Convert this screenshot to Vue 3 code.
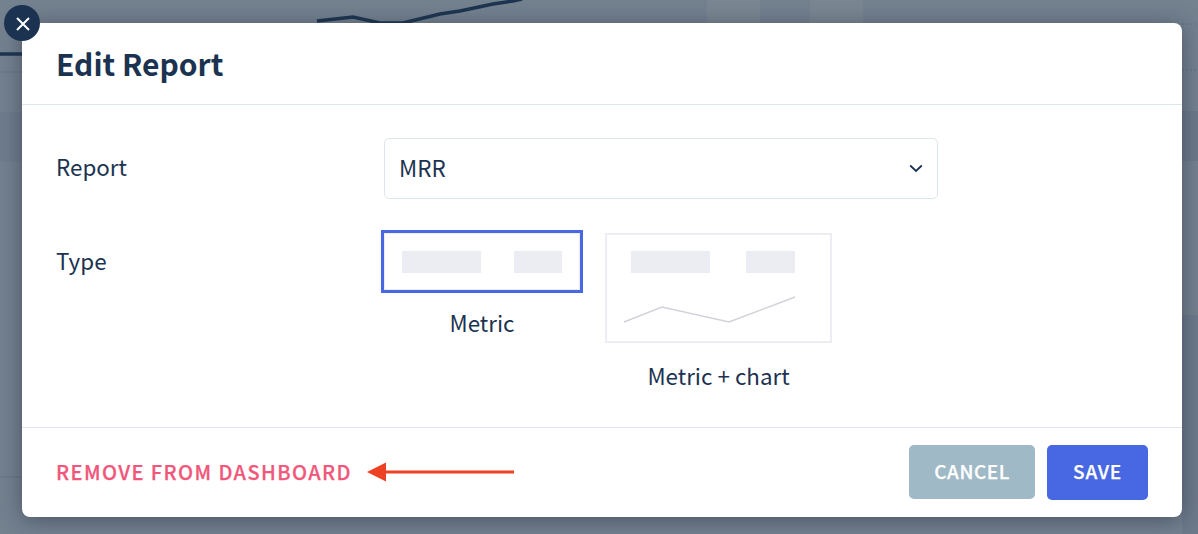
<script setup>
const rows = ['Report', 'Type']
</script>

<template>
  <div class="page">
    <svg class="backdrop" width="1198" height="534" viewBox="0 0 1198 534" aria-hidden="true">
      <rect x="707" y="0" width="53" height="23" fill="#7a8792" />
      <rect x="810" y="0" width="53" height="23" fill="#7a8792" />
      <rect x="0" y="112" width="22" height="50" fill="#6f7c8c" />
      <rect x="1182" y="111" width="16" height="50" fill="#6c7989" />
      <rect x="1182" y="315" width="16" height="219" fill="#6d7a8b" />
      <path d="M0 54H22M317 21L353 17L380 23L403 23L440 14L460 11L493 4L513 1L522 -1" fill="none" stroke="#1d3550" stroke-width="3.5" />
      <path d="M0 72H22M0 477H22" fill="none" stroke="#6b7887" stroke-width="1.5" />
      <path d="M1182 24H1198M1182 70H1198" fill="none" stroke="#67768a" stroke-width="1.5" stroke-dasharray="2 2" />
    </svg>

    <div class="modal">
      <button class="close" aria-label="Close">
        <svg width="14" height="14" viewBox="0 0 14 14"><path d="M1 1L13 13M13 1L1 13" stroke="#fff" stroke-width="2" fill="none" /></svg>
      </button>

      <header class="head"><h1>Edit Report</h1></header>

      <section class="body">
        <div class="row report-row">
          <label class="label report-label">{{ rows[0] }}</label>
          <div class="select">
            <span class="value">MRR</span>
            <svg width="14" height="9" viewBox="0 0 14 9"><path d="M1.2 1.5L7 7L12.8 1.5" fill="none" stroke="#1b3350" stroke-width="1.8" /></svg>
          </div>
        </div>
        <div class="row type-row">
          <label class="label type-label">{{ rows[1] }}</label>
          <div class="types">
            <div class="type">
              <div class="card card-active">
                <i class="bar bar-lg"></i>
                <i class="bar bar-sm"></i>
              </div>
              <span class="cap">Metric</span>
            </div>
            <div class="type">
              <div class="card card-chart">
                <div class="bars">
                  <i class="bar bar-lg"></i>
                  <i class="bar bar-sm"></i>
                </div>
                <svg class="spark" width="173" height="28" viewBox="0 0 173 28"><path d="M1 26L39 11L106 26L172 1" fill="none" stroke="#d1d3da" stroke-width="1.6" /></svg>
              </div>
              <span class="cap">Metric + chart</span>
            </div>
          </div>
        </div>
      </section>

      <footer class="foot">
        <a class="remove">REMOVE FROM DASHBOARD</a>
        <svg class="arrow" width="148" height="22" viewBox="0 0 148 22"><path d="M19 11H147" stroke="#ee4023" stroke-width="3" /><path d="M0 11L19 1.5V20.5Z" fill="#ee4023" /></svg>
        <div class="actions">
          <button class="btn cancel">CANCEL</button>
          <button class="btn save">SAVE</button>
        </div>
      </footer>
    </div>
  </div>
</template>

<style>
html, body { margin: 0; background: #74818f; }
</style>

<style scoped>
.page {
  position: relative;
  width: 1198px;
  height: 534px;
  box-sizing: border-box;
  padding: 23px 16px 17px 22px;
  background: #74818f;
  overflow: hidden;
  font-family: "Noto Sans CJK SC", "Noto Sans", sans-serif;
  color: #1b3350;
}
.backdrop { position: absolute; left: 0; top: 0; }
.modal {
  position: relative;
  height: 494px;
  display: flex;
  flex-direction: column;
  background: #fff;
  border-radius: 8px;
  box-shadow: 0 3px 22px rgba(30, 40, 55, 0.5);
}
.close {
  position: absolute;
  left: -18px;
  top: -18px;
  width: 36px;
  height: 36px;
  padding: 1px 0 0 1px;
  box-sizing: border-box;
  border: 0;
  border-radius: 50%;
  background: #1b3350;
  display: flex;
  align-items: center;
  justify-content: center;
}
.head {
  height: 82px;
  box-sizing: border-box;
  border-bottom: 1px solid #dfe5ee;
  padding: 0 34px 2px;
  display: flex;
  align-items: center;
}
h1 {
  margin: 0;
  font-size: 30px;
  line-height: 40px;
  font-weight: 600;
}
.body {
  height: 323px;
  box-sizing: border-box;
  padding-top: 33px;
  border-bottom: 1px solid #e2e3ec;
}
.row { display: flex; padding-left: 34px; }
.label { width: 328px; font-size: 22.4px; line-height: 30px; }
.report-row { align-items: center; }
.report-label { padding-bottom: 6px; }
.select {
  width: 554px;
  height: 61px;
  box-sizing: border-box;
  border: 1px solid #dfe5ee;
  border-radius: 5px;
  padding: 0 14px;
  display: flex;
  align-items: center;
  justify-content: space-between;
  font-size: 22.4px;
}
.value { padding-bottom: 3px; }
.type-row { margin-top: 31px; }
.type-label { padding-top: 15px; }
.types { display: flex; gap: 22px; align-items: flex-start; margin-left: -3px; }
.type { display: flex; flex-direction: column; align-items: center; }
.card { box-sizing: border-box; }
.card-active {
  width: 202px;
  height: 63px;
  border: 3px solid #4767e3;
  box-shadow: inset 0 0 0 1px #ecedf3;
  padding: 18px 18px 0;
  display: flex;
  gap: 33px;
  align-items: flex-start;
}
.card-active .bar-sm { width: 48px; }
.card-chart {
  width: 227px;
  height: 110px;
  margin-top: 3px;
  border: 2px solid #ecedf3;
  padding-top: 16px;
}
.bars { display: flex; gap: 36px; margin-left: 24px; }
.bar { display: block; height: 22px; background: #ecedf3; }
.bar-lg { width: 79px; }
.bar-sm { width: 49px; }
.spark { display: block; margin: 23px 0 0 16px; }
.cap { font-size: 22.4px; line-height: 30px; margin-top: 14px; }
.type:last-child .cap { margin-top: 17px; }
.foot {
  flex: 1;
  display: flex;
  align-items: center;
  padding: 0 34px;
}
.remove {
  font-size: 20px;
  font-weight: 500;
  letter-spacing: 1.4px;
  color: #f0577a;
  padding-bottom: 2px;
  -webkit-text-stroke: 0.25px #f0577a;
}
.arrow { margin: 0 0 1px 15px; }
.actions { margin-left: auto; display: flex; gap: 12px; align-items: flex-start; }
.btn {
  border: 0;
  border-radius: 5px;
  color: #fff;
  font-family: inherit;
  font-size: 19px;
  font-weight: 500;
  letter-spacing: 0.8px;
  padding: 0 0 4px;
  -webkit-text-stroke: 0.25px #fff;
}
.cancel { width: 126px; height: 54px; background: #9fb9c6; letter-spacing: 0.55px; }
.save { width: 101px; height: 55px; background: #4767e3; }
</style>
